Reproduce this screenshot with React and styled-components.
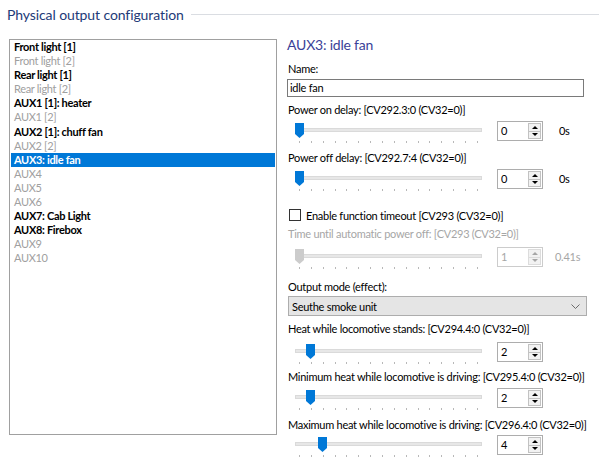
import React from 'react';
import styled, { createGlobalStyle } from 'styled-components';

const GlobalStyle = createGlobalStyle`
  html, body { margin: 0; padding: 0; background: #fff; }
  body { font-family: Lato, "Liberation Sans", sans-serif; font-size: 11px; letter-spacing: -0.27px; color: #000; }
`;

const Page = styled.div`
  width: 599px;
  height: 466px;
  overflow: hidden;
  box-sizing: border-box;
  padding: 5px 0 0 7px;
`;

const Legend = styled.div`
  display: flex;
  align-items: center;
  height: 18px;
  gap: 7px;
`;

const LegendTitle = styled.span`
  font-size: 14px;
  letter-spacing: -0.1px;
  color: #223a78;
  white-space: nowrap;
`;

const LegendLine = styled.div`
  flex: 1;
  height: 1px;
  background: #dadde2;
`;

const Body = styled.div`
  display: flex;
  align-items: flex-start;
  margin-top: 13px;
`;

const ListBox = styled.div`
  box-sizing: border-box;
  width: 268px;
  height: 396px;
  margin: 3px 0 0 2px;
  border: 1px solid #a0a0a0;
  padding: 0 1px;
  background: #fff;
`;

const ListItem = styled.div`
  height: 14.1px;
  line-height: 14.1px;
  padding-left: 3px;
  white-space: nowrap;
  letter-spacing: -0.32px;
  font-weight: ${p => (p.$active ? 700 : 400)};
  color: ${p => (p.$selected ? '#fff' : p.$active ? '#000' : '#a0a0a0')};
  background: ${p => (p.$selected ? '#0078d7' : 'transparent')};
`;

const Panel = styled.div`
  display: flex;
  flex-direction: column;
  width: 300px;
  margin-left: 10px;
`;

const Heading = styled.div`
  font-size: 14px;
  letter-spacing: -0.2px;
  line-height: 18px;
  color: #3b3f98;
`;

const Label = styled.div`
  line-height: 16px;
  padding-left: 1px;
  white-space: nowrap;
  margin-top: ${p => p.$mt}px;
  color: ${p => (p.$disabled ? '#a6a6a6' : '#000')};
`;

const TextInput = styled.div`
  box-sizing: border-box;
  width: 297px;
  height: 18px;
  margin-top: ${p => p.$mt}px;
  border: 1px solid #7a7a7a;
  padding-left: 2px;
  line-height: 16px;
`;

const SliderRow = styled.div`
  display: flex;
  align-items: flex-start;
  height: 24px;
  margin-top: ${p => p.$mt}px;
`;

const Slider = styled.div`
  position: relative;
  width: 190px;
  height: 24px;
  margin-left: 6px;
`;

const Track = styled.div`
  box-sizing: border-box;
  width: 187px;
  height: 4px;
  margin: 8px 0 0 2px;
  background: #e7e7e7;
  border: 1px solid #dadada;
`;

const Ticks = styled.div`
  display: flex;
  justify-content: space-between;
  width: 179px;
  margin: 9px 0 0 6px;
`;

const Tick = styled.span`
  width: 1px;
  height: 2px;
  background: #b8b8b8;
`;

const Thumb = styled.svg`
  position: absolute;
  top: 3px;
  width: 9px;
  height: 15px;
`;

const Spin = styled.div`
  box-sizing: border-box;
  display: flex;
  width: 46px;
  height: 20px;
  margin: 1px 0 0 14px;
  border: 1px solid ${p => (p.$disabled ? '#cccccc' : '#adadad')};
  background: #fff;
`;

const SpinValue = styled.div`
  flex: 1;
  padding-left: 3px;
  line-height: 18px;
  color: ${p => (p.$disabled ? '#a6a6a6' : '#000')};
`;

const SpinButtons = styled.div`
  display: flex;
  flex-direction: column;
  width: 13px;
  margin: 1px 1px 1px 0;
`;

const SpinButton = styled.div`
  flex: 1;
  display: flex;
  align-items: center;
  justify-content: center;
  box-sizing: border-box;
  border: 1px solid ${p => (p.$disabled ? '#dcdcdc' : '#c2c2c2')};
  background: #f2f2f2;
  & + & { border-top: none; }
`;

const Arrow = styled.span`
  width: 0;
  height: 0;
  border-left: 3px solid transparent;
  border-right: 3px solid transparent;
  ${p => (p.$down ? 'border-top' : 'border-bottom')}: 3px solid ${p => (p.$disabled ? '#a6a6a6' : '#000')};
`;

const Unit = styled.div`
  margin: 1px 0 0 ${p => p.$ml}px;
  line-height: 20px;
  color: ${p => (p.$disabled ? '#a6a6a6' : '#000')};
`;

const CheckRow = styled.label`
  display: flex;
  align-items: center;
  gap: 5px;
  height: 16px;
  padding-left: 2px;
  margin-top: ${p => p.$mt}px;
`;

const CheckBox = styled.span`
  box-sizing: border-box;
  width: 12px;
  height: 12px;
  border: 1px solid #333;
  background: #fff;
`;

const Select = styled.div`
  box-sizing: border-box;
  display: flex;
  align-items: center;
  justify-content: space-between;
  width: 299px;
  height: 20px;
  margin: ${p => p.$mt}px 0 0 1px;
  padding: 0 6px 0 3px;
  background: #e5e5e5;
  border: 1px solid #adadad;
`;

const items = [
  ['Front light [1]', true],
  ['Front light [2]', false],
  ['Rear light [1]', true],
  ['Rear light [2]', false],
  ['AUX1 [1]: heater', true],
  ['AUX1 [2]', false],
  ['AUX2 [1]: chuff fan', true],
  ['AUX2 [2]', false],
  ['AUX3: idle fan', true, true],
  ['AUX4', false],
  ['AUX5', false],
  ['AUX6', false],
  ['AUX7: Cab Light', true],
  ['AUX8: Firebox', true],
  ['AUX9', false],
  ['AUX10', false],
];

function SliderControl({ pos, value, unit, disabled, mt, unitMl }) {
  const ticks = Array.from({ length: 16 });
  const left = 6 + (pos * 178) / 15 - 4.5;
  return (
    <SliderRow $mt={mt}>
      <Slider>
        <Track />
        <Ticks>
          {ticks.map((_, i) => (
            <Tick key={i} />
          ))}
        </Ticks>
        <Thumb viewBox="0 0 9 15" style={{ left }}>
          <path d="M0 0 H9 V11 L4.5 15 L0 11 Z" fill={disabled ? '#cccccc' : '#0078d7'} />
        </Thumb>
      </Slider>
      <Spin $disabled={disabled}>
        <SpinValue $disabled={disabled}>{value}</SpinValue>
        <SpinButtons>
          <SpinButton $disabled={disabled}>
            <Arrow $disabled={disabled} />
          </SpinButton>
          <SpinButton $disabled={disabled}>
            <Arrow $down $disabled={disabled} />
          </SpinButton>
        </SpinButtons>
      </Spin>
      {unit && (
        <Unit $ml={unitMl} $disabled={disabled}>
          {unit}
        </Unit>
      )}
    </SliderRow>
  );
}

export default function App() {
  return (
    <Page>
      <GlobalStyle />
      <Legend>
        <LegendTitle>Physical output configuration</LegendTitle>
        <LegendLine />
      </Legend>
      <Body>
        <ListBox>
          {items.map(([name, active, selected]) => (
            <ListItem key={name} $active={active} $selected={selected}>
              {name}
            </ListItem>
          ))}
        </ListBox>
        <Panel>
          <Heading>AUX3: idle fan</Heading>
          <Label $mt={7}>Name:</Label>
          <TextInput $mt={2}>idle fan</TextInput>
          <Label $mt={5}>Power on delay: [CV292.3:0 (CV32=0)]</Label>
          <SliderControl pos={0} value="0" unit="0s" unitMl={16} mt={2} />
          <Label $mt={6}>Power off delay: [CV292.7:4 (CV32=0)]</Label>
          <SliderControl pos={0} value="0" unit="0s" unitMl={16} mt={2} />
          <CheckRow $mt={15}>
            <CheckBox />
            <span>Enable function timeout [CV293 (CV32=0)]</span>
          </CheckRow>
          <Label $mt={3} $disabled>
            Time until automatic power off: [CV293 (CV32=0)]
          </Label>
          <SliderControl pos={0} value="1" unit="0.41s" unitMl={12} mt={4} disabled />
          <Label $mt={9}>Output mode (effect):</Label>
          <Select $mt={1}>
            <span>Seuthe smoke unit</span>
            <svg width="9" height="5" viewBox="0 0 9 5">
              <path d="M0.5 0.5 L4.5 4.5 L8.5 0.5" fill="none" stroke="#6b6b6b" strokeWidth="1" />
            </svg>
          </Select>
          <Label $mt={5}>Heat while locomotive stands: [CV294.4:0 (CV32=0)]</Label>
          <SliderControl pos={1} value="2" mt={4} />
          <Label $mt={4}>Minimum heat while locomotive is driving: [CV295.4:0 (CV32=0)]</Label>
          <SliderControl pos={1} value="2" mt={2} />
          <Label $mt={6}>Maximum heat while locomotive is driving: [CV296.4:0 (CV32=0)]</Label>
          <SliderControl pos={2} value="4" mt={1} />
        </Panel>
      </Body>
    </Page>
  );
}
